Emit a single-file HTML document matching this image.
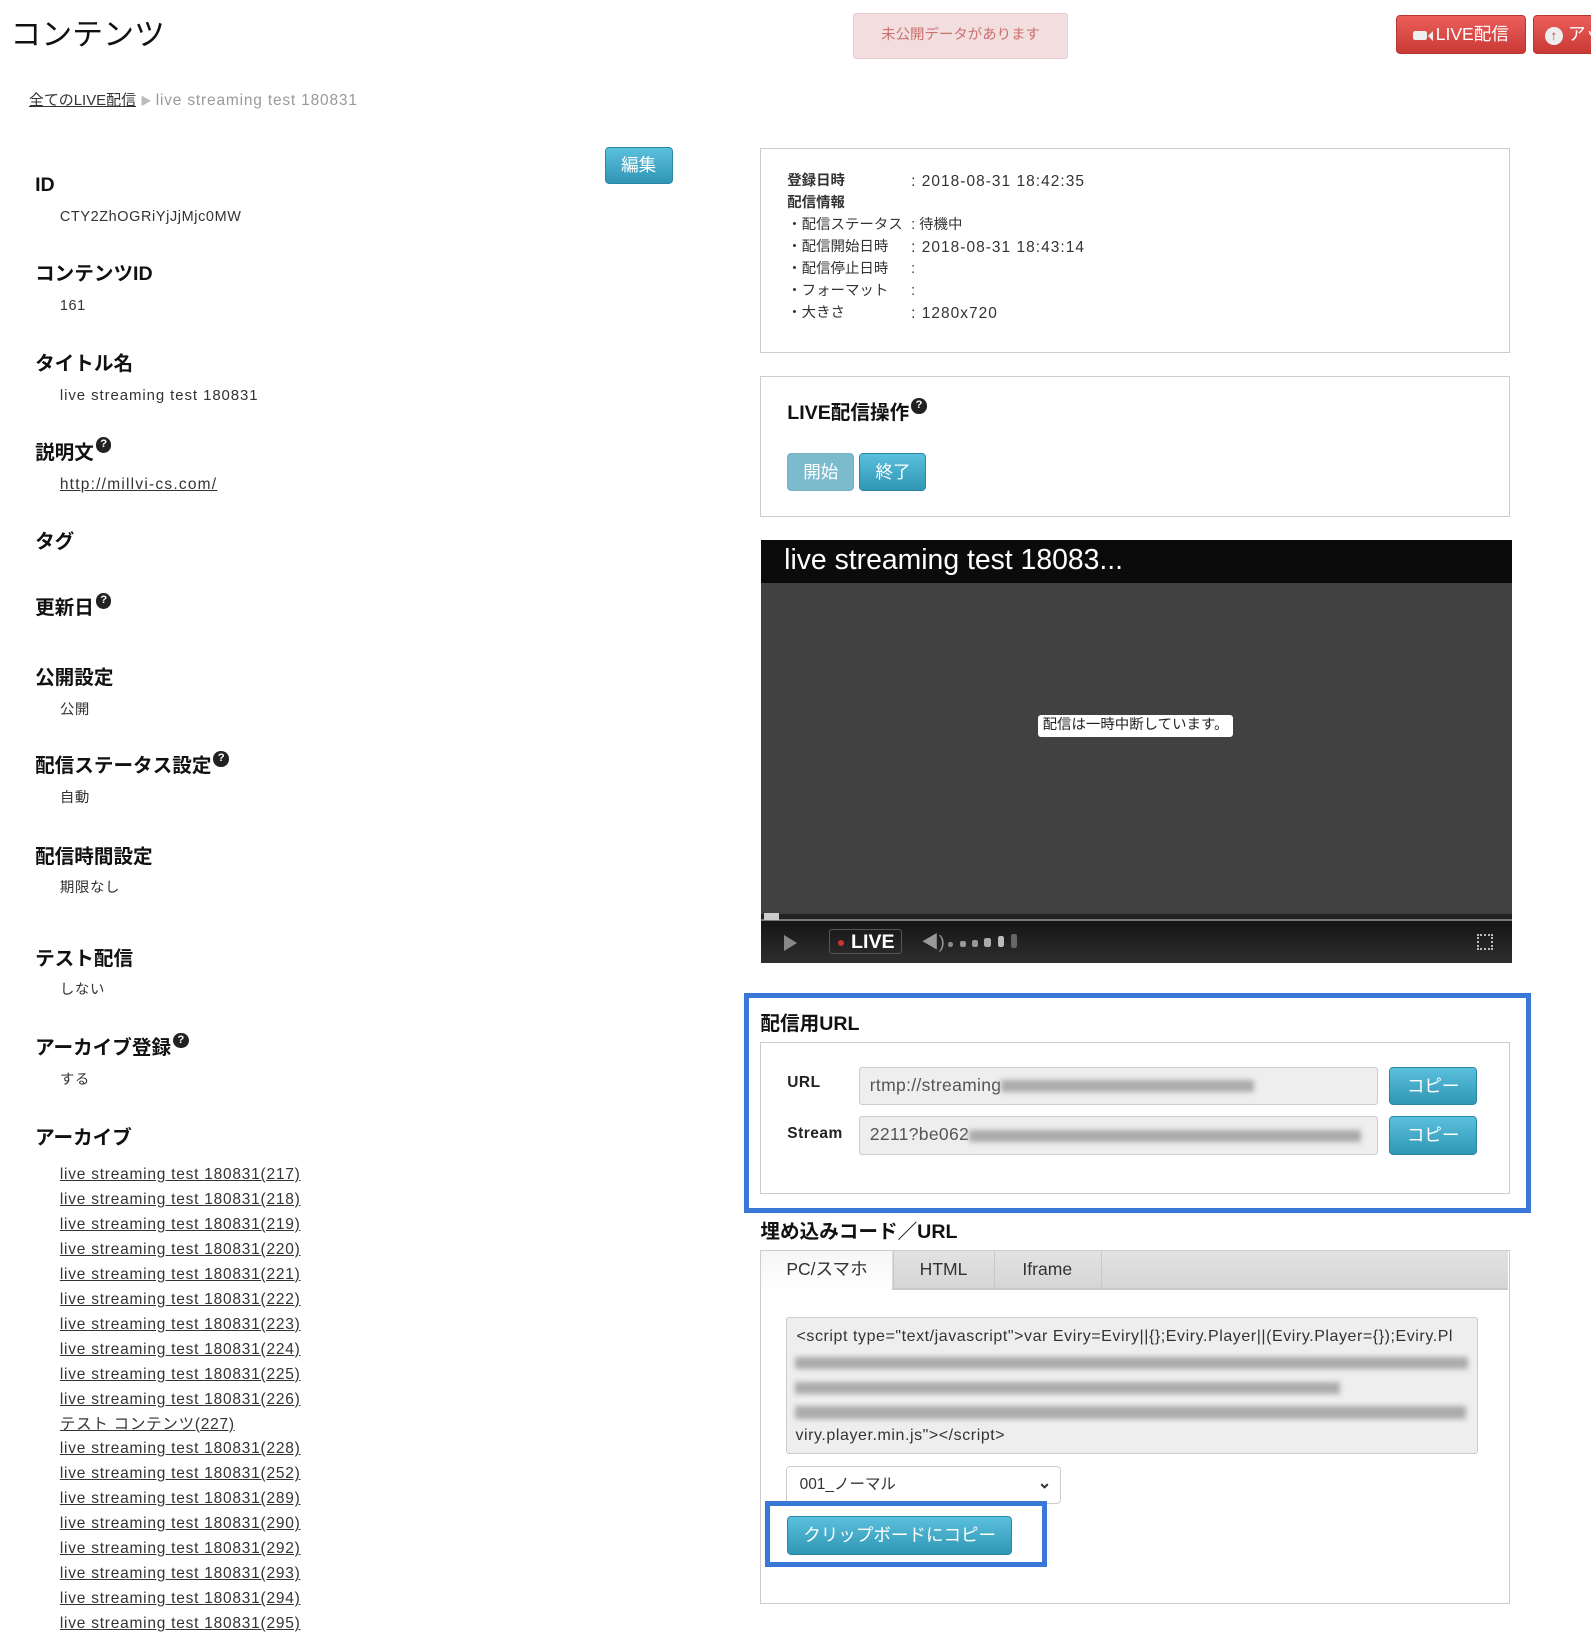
<!DOCTYPE html>
<html><head><meta charset="utf-8">
<style>
html{zoom:1.0318}
body{margin:0;width:1542px;height:1568px;position:relative;overflow:hidden;background:#fff;font-family:"Liberation Sans","Noto Sans CJK JP",sans-serif;color:#222}
.a{position:absolute;white-space:nowrap}
.h{font-size:19px;font-weight:bold;color:#111;line-height:24px}
.v{font-size:14px;line-height:18px;color:#333;letter-spacing:.6px}
.q{display:inline-block;width:15px;height:15px;border-radius:50%;background:#222;color:#fff;font-size:11px;line-height:15px;text-align:center;vertical-align:top;margin-left:2px;margin-top:-3px;font-weight:bold;letter-spacing:0}
.lk{font-size:15px;color:#333;text-decoration:underline;line-height:18px;letter-spacing:.75px}
.box{position:absolute;border:1px solid #ccc;background:#fff}
.btn{position:absolute;border-radius:4px;color:#fff;text-align:center;background:linear-gradient(#5bc0de,#2f96b4);border:1px solid #2a87a3;font-size:17px}
.blur{position:absolute;height:12px;background:#9a9a9a;filter:blur(2.5px);opacity:.8}
.inp{position:absolute;background:#eee;border:1px solid #ccc;border-radius:3px;font-size:17px;color:#555;line-height:34px;padding-left:9px;overflow:hidden;letter-spacing:.3px}
.num{letter-spacing:1px;font-size:15px}
</style></head><body>
<div class="a" style="left:10px;top:14px;font-size:30px;color:#111;line-height:40px">コンテンツ</div>
<div class="a" style="left:827px;top:13px;width:206px;height:42px;background:#f2dede;border:1px solid #ebccd1;border-radius:3px;color:#c9716f;font-size:14px;line-height:42px;text-align:center">未公開データがあります</div>
<div class="a" style="left:1353px;top:15px;width:124px;height:35px;border-radius:4px;background:linear-gradient(#ec5e5a,#c93a36);border:1px solid #b83430;color:#fff;font-size:17px;line-height:35px;text-align:center"><span style="display:inline-block;width:13px;height:9px;background:#eee;border-radius:2px;vertical-align:middle;margin-right:1px"></span><span style="display:inline-block;width:0;height:0;border:5px solid transparent;border-right-color:#eee;border-left:0;vertical-align:middle;margin-right:3px"></span>LIVE配信</div>
<div class="a" style="left:1486px;top:15px;width:80px;height:35px;border-radius:4px;background:linear-gradient(#ec5e5a,#c93a36);border:1px solid #b83430;color:#fff;font-size:17px;line-height:35px;padding-left:10px"><span style="display:inline-block;width:18px;height:18px;border-radius:50%;background:#eee;color:#c93a36;font-size:13px;line-height:18px;text-align:center;vertical-align:middle;font-weight:bold">↑</span> アッ</div>
<div class="a" style="left:28px;top:89px;font-size:14.5px;line-height:18px"><span style="text-decoration:underline;color:#333">全てのLIVE配信</span> <span style="color:#bbb;font-size:11px">▶</span> <span style="color:#999;letter-spacing:.8px;font-size:15px">live streaming test 180831</span></div>
<div class="btn" style="left:586px;top:142px;width:64px;height:34px;line-height:34px">編集</div>

<div class="a h" style="left:34px;top:168px">ID</div>
<div class="a v" style="left:58px;top:202px">CTY2ZhOGRiYjJjMjc0MW</div>
<div class="a h" style="left:34px;top:254px">コンテンツID</div>
<div class="a v" style="left:58px;top:288px">161</div>
<div class="a h" style="left:34px;top:341px">タイトル名</div>
<div class="a v" style="left:58px;top:375px;font-size:14.5px;letter-spacing:.9px">live streaming test 180831</div>
<div class="a h" style="left:34px;top:427px">説明文<span class="q">?</span></div>
<div class="a lk" style="left:58px;top:461px;letter-spacing:1.2px">http://millvi-cs.com/</div>
<div class="a h" style="left:34px;top:514px">タグ</div>
<div class="a h" style="left:34px;top:578px">更新日<span class="q">?</span></div>
<div class="a h" style="left:34px;top:645px">公開設定</div>
<div class="a v" style="left:58px;top:679px">公開</div>
<div class="a h" style="left:34px;top:731px">配信ステータス設定<span class="q">?</span></div>
<div class="a v" style="left:58px;top:765px">自動</div>
<div class="a h" style="left:34px;top:819px">配信時間設定</div>
<div class="a v" style="left:58px;top:852px">期限なし</div>
<div class="a h" style="left:34px;top:918px">テスト配信</div>
<div class="a v" style="left:58px;top:951px">しない</div>
<div class="a h" style="left:34px;top:1004px">アーカイブ登録<span class="q">?</span></div>
<div class="a v" style="left:58px;top:1038px">する</div>
<div class="a h" style="left:34px;top:1091px">アーカイブ</div>
<div class="a" style="left:58px;top:1127px;line-height:24.2px">
<div class="lk" style="line-height:24.2px">live streaming test 180831(217)</div>
<div class="lk" style="line-height:24.2px">live streaming test 180831(218)</div>
<div class="lk" style="line-height:24.2px">live streaming test 180831(219)</div>
<div class="lk" style="line-height:24.2px">live streaming test 180831(220)</div>
<div class="lk" style="line-height:24.2px">live streaming test 180831(221)</div>
<div class="lk" style="line-height:24.2px">live streaming test 180831(222)</div>
<div class="lk" style="line-height:24.2px">live streaming test 180831(223)</div>
<div class="lk" style="line-height:24.2px">live streaming test 180831(224)</div>
<div class="lk" style="line-height:24.2px">live streaming test 180831(225)</div>
<div class="lk" style="line-height:24.2px">live streaming test 180831(226)</div>
<div class="lk" style="line-height:24.2px">テスト コンテンツ(227)</div>
<div class="lk" style="line-height:24.2px">live streaming test 180831(228)</div>
<div class="lk" style="line-height:24.2px">live streaming test 180831(252)</div>
<div class="lk" style="line-height:24.2px">live streaming test 180831(289)</div>
<div class="lk" style="line-height:24.2px">live streaming test 180831(290)</div>
<div class="lk" style="line-height:24.2px">live streaming test 180831(292)</div>
<div class="lk" style="line-height:24.2px">live streaming test 180831(293)</div>
<div class="lk" style="line-height:24.2px">live streaming test 180831(294)</div>
<div class="lk" style="line-height:24.2px">live streaming test 180831(295)</div>
</div>

<!-- info box -->
<div class="box" style="left:737px;top:143px;width:725px;height:197px"></div>
<div class="a" style="left:763px;top:166px;font-size:14px;line-height:21.3px;color:#333">
<div><b>登録日時</b></div><div><b>配信情報</b></div><div>・配信ステータス</div><div>・配信開始日時</div><div>・配信停止日時</div><div>・フォーマット</div><div>・大きさ</div></div>
<div class="a" style="left:883px;top:166px;font-size:14px;line-height:21.3px;color:#333">
<div class="num">: 2018-08-31 18:42:35</div><div>&nbsp;</div><div>: 待機中</div><div class="num">: 2018-08-31 18:43:14</div><div>:</div><div>:</div><div class="num">: 1280x720</div></div>

<div class="box" style="left:737px;top:364px;width:725px;height:135px"></div>
<div class="a h" style="left:763px;top:389px">LIVE配信操作<span class="q">?</span></div>
<div class="btn" style="left:763px;top:439px;width:63px;height:35px;line-height:35px;background:#7bbbcd;border-color:#72b0c2">開始</div>
<div class="btn" style="left:833px;top:439px;width:63px;height:35px;line-height:35px">終了</div>

<!-- video -->
<div class="a" style="left:738px;top:523px;width:727px;height:410px;background:#414141"></div>
<div class="a" style="left:738px;top:523px;width:727px;height:42px;background:#0b0b0b;color:#fff;font-size:27.5px;line-height:40px;padding-left:22px;box-sizing:border-box">live streaming test 18083...</div>
<div class="a" style="left:1006px;top:693px;width:189px;height:21px;background:#fff;border-radius:3px;font-size:14px;line-height:21px;text-align:center;color:#222">配信は一時中断しています。</div>
<div class="a" style="left:738px;top:886px;width:727px;height:7px;background:#222"></div>
<div class="a" style="left:738px;top:891px;width:727px;height:2px;background:#777"></div>
<div class="a" style="left:740px;top:885px;width:15px;height:7px;background:#ccc"></div>
<div class="a" style="left:738px;top:893px;width:727px;height:40px;background:linear-gradient(#151515,#2e2e2e)"></div>
<div class="a" style="left:760px;top:906px;width:0;height:0;border-left:13px solid #888;border-top:8px solid transparent;border-bottom:8px solid transparent"></div>
<div class="a" style="left:803px;top:900px;width:71px;height:25px;border:1px solid #555;border-radius:3px;color:#fff;font-size:19px;line-height:25px;font-weight:bold;text-align:right;padding-right:6px;box-sizing:border-box"><span style="position:absolute;left:8px;top:10px;width:6px;height:6px;border-radius:50%;background:#c33"></span>LIVE</div>
<div class="a" style="left:893px;top:903px;color:#999;font-size:17px;line-height:20px">◀)</div>
<div class="a" style="left:919px;top:905px;width:70px;height:16px">
<span style="position:absolute;left:0;top:8px;width:5px;height:5px;background:#888;border-radius:2px"></span>
<span style="position:absolute;left:11px;top:7px;width:6px;height:6px;background:#999;border-radius:2px"></span>
<span style="position:absolute;left:23px;top:6px;width:6px;height:7px;background:#999;border-radius:2px"></span>
<span style="position:absolute;left:35px;top:4px;width:6px;height:9px;background:#aaa;border-radius:2px"></span>
<span style="position:absolute;left:48px;top:2px;width:6px;height:11px;background:#bbb;border-radius:2px"></span>
<span style="position:absolute;left:61px;top:0;width:6px;height:14px;background:#666;border-radius:2px"></span></div>
<div class="a" style="left:1431px;top:905px;width:16px;height:16px;border:2px dotted #bbb;box-sizing:border-box"></div>

<!-- streaming url -->
<div class="a" style="left:721px;top:962px;width:763px;height:214px;border:5px solid #3a78d8;box-sizing:border-box"></div>
<div class="a h" style="left:737px;top:981px">配信用URL</div>
<div class="box" style="left:737px;top:1010px;width:725px;height:145px"></div>
<div class="a" style="left:763px;top:1040px;font-size:15px;font-weight:bold;line-height:20px;letter-spacing:.5px">URL</div>
<div class="inp" style="left:833px;top:1034px;width:492px;height:35px">rtmp://streaming<span style="display:inline-block;width:245px;height:12px;background:#aaa;filter:blur(2.5px);vertical-align:middle"></span></div>
<div class="btn" style="left:1346px;top:1034px;width:84px;height:35px;line-height:35px">コピー</div>
<div class="a" style="left:763px;top:1089px;font-size:15px;font-weight:bold;line-height:20px;letter-spacing:.5px">Stream</div>
<div class="inp" style="left:833px;top:1082px;width:492px;height:35px">2211?be062<span style="display:inline-block;width:380px;height:12px;background:#aaa;filter:blur(2.5px);vertical-align:middle"></span></div>
<div class="btn" style="left:1346px;top:1082px;width:84px;height:35px;line-height:35px">コピー</div>

<!-- embed -->
<div class="a h" style="left:737px;top:1182px">埋め込みコード／URL</div>
<div class="box" style="left:737px;top:1211px;width:725px;height:342px"></div>
<div class="a" style="left:738px;top:1212px;width:724px;height:38px;background:linear-gradient(#e2e2e2,#d6d6d6);border-bottom:2px solid #c8c8c8;box-sizing:border-box"></div>
<div class="a" style="left:738px;top:1212px;width:127px;height:40px;background:linear-gradient(#f6f6f6,#fff);font-size:17px;line-height:36px;text-align:center;color:#333">PC/スマホ</div>
<div class="a" style="left:865px;top:1212px;width:97px;height:36px;border-left:1px solid #c8c8c8;border-right:1px solid #c8c8c8;font-size:17px;line-height:36px;text-align:center;color:#333">HTML</div>
<div class="a" style="left:963px;top:1212px;width:104px;height:36px;border-right:1px solid #c8c8c8;font-size:17px;line-height:36px;text-align:center;color:#333">Iframe</div>
<div class="a" style="left:762px;top:1276px;width:670px;height:133px;background:#eee;border:1px solid #ccc;border-radius:3px;box-sizing:border-box;overflow:hidden">
<div class="a" style="left:9px;top:7px;font-size:15.5px;line-height:24px;color:#333;letter-spacing:.55px">&lt;script type="text/javascript"&gt;var Eviry=Eviry||{};Eviry.Player||(Eviry.Player={});Eviry.Pl</div>
<div class="blur" style="left:8px;top:38px;width:652px"></div>
<div class="blur" style="left:8px;top:62px;width:528px"></div>
<div class="blur" style="left:8px;top:86px;width:650px"></div>
<div class="a" style="left:8px;top:103px;font-size:15.5px;line-height:24px;color:#333;letter-spacing:.55px">viry.player.min.js"&gt;&lt;/script&gt;</div></div>
<div class="a" style="left:762px;top:1421px;width:266px;height:37px;border:1px solid #ccc;border-radius:4px;box-sizing:border-box;font-size:15px;line-height:35px;padding-left:12px;color:#333">001_ノーマル<span style="position:absolute;right:8px;top:-2px;font-size:16px;font-weight:bold">⌄</span></div>
<div class="a" style="left:741px;top:1455px;width:274px;height:64px;border:5px solid #3a78d8;box-sizing:border-box"></div>
<div class="btn" style="left:763px;top:1469px;width:216px;height:36px;line-height:36px">クリップボードにコピー</div>
</body></html>
